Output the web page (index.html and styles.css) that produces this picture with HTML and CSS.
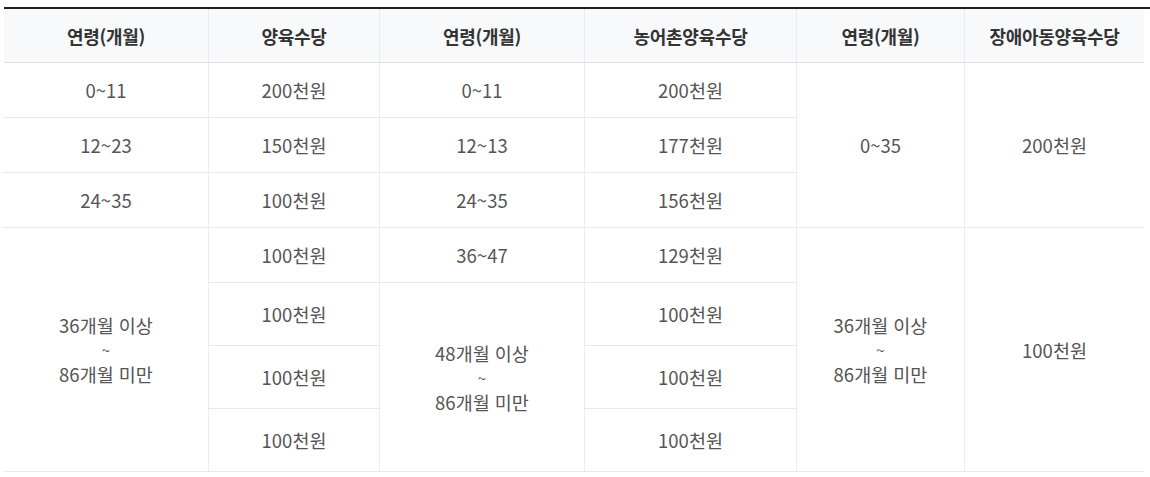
FILE: index.html
```html
<!DOCTYPE html>
<html lang="ko">
<head>
<meta charset="utf-8">
<title>양육수당</title>
<link rel="stylesheet" href="styles.css">
</head>
<body>
<div class="wrap">
  <table class="grid">
    <colgroup>
      <col class="c1"><col class="c2"><col class="c3"><col class="c4"><col class="c5"><col class="c6">
    </colgroup>
    <thead>
      <tr class="head">
        <th>연령(개월)</th>
        <th>양육수당</th>
        <th>연령(개월)</th>
        <th>농어촌양육수당</th>
        <th>연령(개월)</th>
        <th>장애아동양육수당</th>
      </tr>
    </thead>
    <tbody>
      <tr class="r">
        <td>0~11</td>
        <td>200천원</td>
        <td>0~11</td>
        <td>200천원</td>
        <td rowspan="3">0~35</td>
        <td rowspan="3">200천원</td>
      </tr>
      <tr class="r">
        <td>12~23</td>
        <td>150천원</td>
        <td>12~13</td>
        <td>177천원</td>
      </tr>
      <tr class="r">
        <td>24~35</td>
        <td>100천원</td>
        <td>24~35</td>
        <td>156천원</td>
      </tr>
      <tr class="r">
        <td rowspan="4"><span class="ln">36개월 이상</span><span class="tl">~</span><span class="ln">86개월 미만</span></td>
        <td>100천원</td>
        <td>36~47</td>
        <td>129천원</td>
        <td rowspan="4"><span class="ln">36개월 이상</span><span class="tl">~</span><span class="ln">86개월 미만</span></td>
        <td rowspan="4">100천원</td>
      </tr>
      <tr class="t">
        <td>100천원</td>
        <td rowspan="3"><span class="ln">48개월 이상</span><span class="tl">~</span><span class="ln">86개월 미만</span></td>
        <td>100천원</td>
      </tr>
      <tr class="t">
        <td>100천원</td>
        <td>100천원</td>
      </tr>
      <tr class="t">
        <td>100천원</td>
        <td>100천원</td>
      </tr>
    </tbody>
  </table>
</div>
</body>
</html>
```

FILE: styles.css
```css
html, body {
  margin: 0;
  padding: 0;
  background: #ffffff;
}

body {
  font-family: "Noto Sans CJK KR", "Noto Sans", sans-serif;
  padding-top: 7px;
}

.wrap {
  margin-left: 4px;
  border-top: 2px solid #1e1e1e;
}

.grid {
  width: 1140px;
  border-collapse: separate;
  border-spacing: 0;
  table-layout: fixed;
}

.c1 { width: 204px; }
.c2 { width: 171px; }
.c3 { width: 205px; }
.c4 { width: 212px; }
.c5 { width: 168px; }
.c6 { width: 180px; }

.grid th,
.grid td {
  padding: 0;
  text-align: center;
  vertical-align: middle;
  border-bottom: 1px solid #e8e8e8;
  border-left: 1px solid #ececec;
}

.grid th:first-child,
.grid .r > td:first-child {
  border-left: none;
}

.head {
  height: 54px;
}

.head th {
  background: #f8f9fb;
  color: #333333;
  font-size: 18px;
  font-weight: 700;
  border-bottom-color: #dedede;
  letter-spacing: -0.3px;
}

.grid td {
  color: #555555;
  font-size: 18.5px;
  font-weight: 400;
  line-height: 24px;
}

.r { height: 55px; }
.t { height: 63px; }

.ln,
.tl {
  display: block;
}

.tl {
  font-size: 15px;
  line-height: 25px;
}
```
